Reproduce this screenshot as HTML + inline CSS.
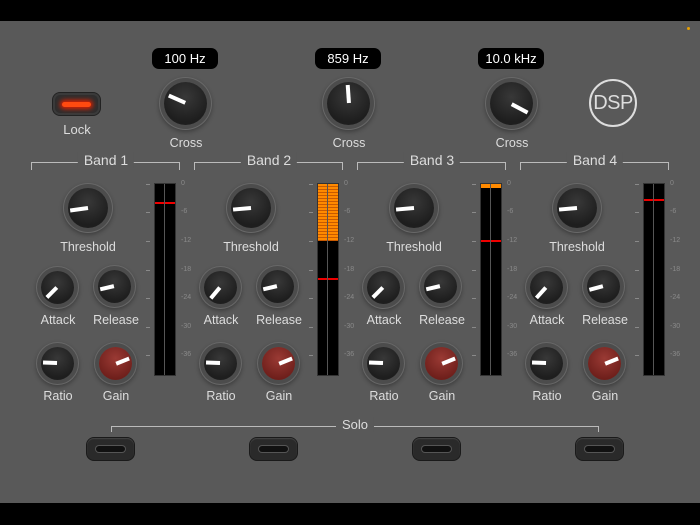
<!DOCTYPE html>
<html><head><meta charset="utf-8"><style>
*{margin:0;padding:0;box-sizing:border-box}
body{width:700px;height:525px;background:#000;position:relative;overflow:hidden;font-family:"Liberation Sans",sans-serif;color:#ddd}
.panel{position:absolute;left:0;top:21px;width:700px;height:482px;background:#595959}
.a{position:absolute}
.t{position:absolute;transform:translateX(-50%);white-space:nowrap;font-size:12.5px;color:#ddd}
.k{position:absolute;border-radius:50%;background:radial-gradient(circle at 50% 35%,#383838,#1e1e1e 70%);box-shadow:0 0 0 4px #4c4c4c,0 0 0 5px #686868,0 2px 4px 5px rgba(0,0,0,.3)}
.k.r{background:radial-gradient(circle at 50% 35%,#9a3a34,#6e1f1b 75%)}
.k i{position:absolute;left:0;top:0;width:100%;height:100%}
.k i b{position:absolute;left:50%;top:6%;width:4px;margin-left:-2px;height:44%;background:#fff}
.pill{position:absolute;height:21px;background:#000;border-radius:7px;color:#fff;font-size:13px;text-align:center;line-height:21px}
.br{position:absolute;height:8px;border:1.5px solid #bbb;border-bottom:none}
.bt{position:absolute;background:#595959;padding:0 6px;font-size:14px;color:#ddd;transform:translateX(-50%);top:-11px}
.m{position:absolute;top:183px;width:22px;height:193px;background:#000;border:1px solid #333}
.m:after{content:"";position:absolute;left:9px;top:0;width:1px;height:100%;background:#555}
.sc{position:absolute;font-size:7px;color:#8a8a8a}
.tk{position:absolute;width:4px;height:1px;background:#8a8a8a}
.btn{position:absolute;width:47px;height:22px;border-radius:7px;background:#2a2a2a;box-shadow:0 0 0 1px #1a1a1a,inset 0 1px 1px #444}
.btn:after{content:"";position:absolute;left:9px;top:8px;width:29px;height:6px;border-radius:3px;background:#111;box-shadow:0 0 0 1px #555}
</style></head><body>
<div class="panel"></div>
<div class="a" style="left:687px;top:27px;width:3px;height:3px;background:#e9a000;border-radius:50%"></div>

<div class="a" style="left:53px;top:93px;width:47px;height:22px;border-radius:7px;background:#2e2e2e;box-shadow:0 0 0 1px #222,inset 0 0 0 2px #3a3a3a"></div>
<div class="a" style="left:62px;top:102px;width:29px;height:5px;border-radius:3px;background:#ff4a10;box-shadow:0 0 5px 2px #e02000"></div>
<div class="t" style="left:77px;top:122px;font-size:13px">Lock</div>

<div class="pill" style="left:152px;top:48px;width:66px">100 Hz</div>
<div class="pill" style="left:315px;top:48px;width:66px">859 Hz</div>
<div class="pill" style="left:478px;top:48px;width:66px">10.0 kHz</div>
<div class="k" style="left:164px;top:82px;width:43px;height:43px"><i style="transform:rotate(294deg)"><b></b></i></div>
<div class="k" style="left:327px;top:82px;width:43px;height:43px"><i style="transform:rotate(356deg)"><b></b></i></div>
<div class="k" style="left:490px;top:82px;width:43px;height:43px"><i style="transform:rotate(118deg)"><b></b></i></div>
<div class="t" style="left:186px;top:136px">Cross</div>
<div class="t" style="left:349px;top:136px">Cross</div>
<div class="t" style="left:512px;top:136px">Cross</div>
<div class="a" style="left:589px;top:79px;width:48px;height:48px;border:2px solid #ddd;border-radius:50%;text-align:center;line-height:44px;font-size:20px;color:#ddd;letter-spacing:-0.5px">DSP</div>

<div class="br" style="left:31px;top:162px;width:149px"><span class="bt" style="left:74px">Band 1</span></div>
<div class="br" style="left:194px;top:162px;width:149px"><span class="bt" style="left:74px">Band 2</span></div>
<div class="br" style="left:357px;top:162px;width:149px"><span class="bt" style="left:74px">Band 3</span></div>
<div class="br" style="left:520px;top:162px;width:149px"><span class="bt" style="left:74px">Band 4</span></div>

<div class="k" style="left:68px;top:188px;width:40px;height:40px"><i style="transform:rotate(262deg)"><b></b></i></div>
<div class="t" style="left:88px;top:240px">Threshold</div>
<div class="k" style="left:41px;top:271px;width:33px;height:33px"><i style="transform:rotate(225deg)"><b></b></i></div>
<div class="k" style="left:98px;top:270px;width:33px;height:33px"><i style="transform:rotate(257deg)"><b></b></i></div>
<div class="t" style="left:58px;top:313px">Attack</div><div class="t" style="left:116px;top:313px">Release</div>
<div class="k" style="left:41px;top:347px;width:33px;height:33px"><i style="transform:rotate(272deg)"><b></b></i></div>
<div class="k r" style="left:99px;top:347px;width:33px;height:33px"><i style="transform:rotate(68deg)"><b></b></i></div>
<div class="t" style="left:58px;top:389px">Ratio</div><div class="t" style="left:116px;top:389px">Gain</div>

<div class="k" style="left:231px;top:188px;width:40px;height:40px"><i style="transform:rotate(265deg)"><b></b></i></div>
<div class="t" style="left:251px;top:240px">Threshold</div>
<div class="k" style="left:204px;top:271px;width:33px;height:33px"><i style="transform:rotate(220deg)"><b></b></i></div>
<div class="k" style="left:261px;top:270px;width:33px;height:33px"><i style="transform:rotate(257deg)"><b></b></i></div>
<div class="t" style="left:221px;top:313px">Attack</div><div class="t" style="left:279px;top:313px">Release</div>
<div class="k" style="left:204px;top:347px;width:33px;height:33px"><i style="transform:rotate(272deg)"><b></b></i></div>
<div class="k r" style="left:262px;top:347px;width:33px;height:33px"><i style="transform:rotate(68deg)"><b></b></i></div>
<div class="t" style="left:221px;top:389px">Ratio</div><div class="t" style="left:279px;top:389px">Gain</div>

<div class="k" style="left:394px;top:188px;width:40px;height:40px"><i style="transform:rotate(265deg)"><b></b></i></div>
<div class="t" style="left:414px;top:240px">Threshold</div>
<div class="k" style="left:367px;top:271px;width:33px;height:33px"><i style="transform:rotate(225deg)"><b></b></i></div>
<div class="k" style="left:424px;top:270px;width:33px;height:33px"><i style="transform:rotate(257deg)"><b></b></i></div>
<div class="t" style="left:384px;top:313px">Attack</div><div class="t" style="left:442px;top:313px">Release</div>
<div class="k" style="left:367px;top:347px;width:33px;height:33px"><i style="transform:rotate(272deg)"><b></b></i></div>
<div class="k r" style="left:425px;top:347px;width:33px;height:33px"><i style="transform:rotate(68deg)"><b></b></i></div>
<div class="t" style="left:384px;top:389px">Ratio</div><div class="t" style="left:442px;top:389px">Gain</div>

<div class="k" style="left:557px;top:188px;width:40px;height:40px"><i style="transform:rotate(265deg)"><b></b></i></div>
<div class="t" style="left:577px;top:240px">Threshold</div>
<div class="k" style="left:530px;top:271px;width:33px;height:33px"><i style="transform:rotate(222deg)"><b></b></i></div>
<div class="k" style="left:587px;top:270px;width:33px;height:33px"><i style="transform:rotate(255deg)"><b></b></i></div>
<div class="t" style="left:547px;top:313px">Attack</div><div class="t" style="left:605px;top:313px">Release</div>
<div class="k" style="left:530px;top:347px;width:33px;height:33px"><i style="transform:rotate(272deg)"><b></b></i></div>
<div class="k r" style="left:588px;top:347px;width:33px;height:33px"><i style="transform:rotate(68deg)"><b></b></i></div>
<div class="t" style="left:547px;top:389px">Ratio</div><div class="t" style="left:605px;top:389px">Gain</div>

<div class="m" style="left:154px"><div class="a" style="left:0;top:18px;width:20px;height:2px;background:#e00"></div></div>
<div class="m" style="left:317px"><div class="a" style="left:0;top:0;width:20px;height:57px;background:repeating-linear-gradient(#ff8a00 0 2px,#c85a00 2px 3px)"></div><div class="a" style="left:0;top:94px;width:20px;height:2px;background:#e00"></div></div>
<div class="m" style="left:480px"><div class="a" style="left:0;top:0;width:20px;height:4px;background:#ff8a00"></div><div class="a" style="left:0;top:56px;width:20px;height:2px;background:#e00"></div></div>
<div class="m" style="left:643px"><div class="a" style="left:0;top:15px;width:20px;height:2px;background:#e00"></div></div>

<div class="sc" style="left:181px;top:180px">0</div><div class="sc" style="left:181px;top:208px">-6</div><div class="sc" style="left:181px;top:237px">-12</div><div class="sc" style="left:181px;top:266px">-18</div><div class="sc" style="left:181px;top:294px">-24</div><div class="sc" style="left:181px;top:323px">-30</div><div class="sc" style="left:181px;top:351px">-36</div>
<div class="sc" style="left:344px;top:180px">0</div><div class="sc" style="left:344px;top:208px">-6</div><div class="sc" style="left:344px;top:237px">-12</div><div class="sc" style="left:344px;top:266px">-18</div><div class="sc" style="left:344px;top:294px">-24</div><div class="sc" style="left:344px;top:323px">-30</div><div class="sc" style="left:344px;top:351px">-36</div>
<div class="sc" style="left:507px;top:180px">0</div><div class="sc" style="left:507px;top:208px">-6</div><div class="sc" style="left:507px;top:237px">-12</div><div class="sc" style="left:507px;top:266px">-18</div><div class="sc" style="left:507px;top:294px">-24</div><div class="sc" style="left:507px;top:323px">-30</div><div class="sc" style="left:507px;top:351px">-36</div>
<div class="sc" style="left:670px;top:180px">0</div><div class="sc" style="left:670px;top:208px">-6</div><div class="sc" style="left:670px;top:237px">-12</div><div class="sc" style="left:670px;top:266px">-18</div><div class="sc" style="left:670px;top:294px">-24</div><div class="sc" style="left:670px;top:323px">-30</div><div class="sc" style="left:670px;top:351px">-36</div>

<div class="tk" style="left:146px;top:184px"></div><div class="tk" style="left:146px;top:212px"></div><div class="tk" style="left:146px;top:241px"></div><div class="tk" style="left:146px;top:270px"></div><div class="tk" style="left:146px;top:298px"></div><div class="tk" style="left:146px;top:327px"></div><div class="tk" style="left:146px;top:355px"></div>
<div class="tk" style="left:309px;top:184px"></div><div class="tk" style="left:309px;top:212px"></div><div class="tk" style="left:309px;top:241px"></div><div class="tk" style="left:309px;top:270px"></div><div class="tk" style="left:309px;top:298px"></div><div class="tk" style="left:309px;top:327px"></div><div class="tk" style="left:309px;top:355px"></div>
<div class="tk" style="left:472px;top:184px"></div><div class="tk" style="left:472px;top:212px"></div><div class="tk" style="left:472px;top:241px"></div><div class="tk" style="left:472px;top:270px"></div><div class="tk" style="left:472px;top:298px"></div><div class="tk" style="left:472px;top:327px"></div><div class="tk" style="left:472px;top:355px"></div>
<div class="tk" style="left:635px;top:184px"></div><div class="tk" style="left:635px;top:212px"></div><div class="tk" style="left:635px;top:241px"></div><div class="tk" style="left:635px;top:270px"></div><div class="tk" style="left:635px;top:298px"></div><div class="tk" style="left:635px;top:327px"></div><div class="tk" style="left:635px;top:355px"></div>

<div class="br" style="left:111px;top:426px;width:488px;height:6px"><span class="bt" style="left:243px;top:-10px;font-size:13px">Solo</span></div>
<div class="btn" style="left:87px;top:438px"></div>
<div class="btn" style="left:250px;top:438px"></div>
<div class="btn" style="left:413px;top:438px"></div>
<div class="btn" style="left:576px;top:438px"></div>
</body></html>
